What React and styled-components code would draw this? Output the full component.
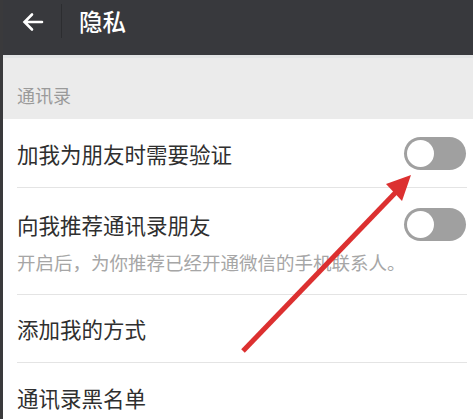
import React from 'react';
import styled, { createGlobalStyle } from 'styled-components';

const GlobalStyles = createGlobalStyle`
  body {
    margin: 0;
    font-family: 'Noto Sans CJK SC', 'Noto Sans', sans-serif;
    background: #fff;
    overflow: hidden;
  }
`;

const Page = styled.div`
  position: relative;
  width: 473px;
  height: 419px;
  overflow: hidden;
  background: #fff;
  border-left: 3px solid #3a3a3c;
  box-sizing: border-box;
`;

const Header = styled.div`
  display: flex;
  align-items: center;
  height: 55px;
  background: #38393d;
  border-bottom: 3px solid #e2e4e5;
`;

const BackButton = styled.div`
  width: 58px;
  display: flex;
  justify-content: center;
  align-items: center;
  padding-left: 2px;
  box-sizing: border-box;
`;

const Divider = styled.div`
  width: 1px;
  height: 34px;
  background: #2c2d30;
  margin-top: -14px;
`;

const Title = styled.div`
  color: #fff;
  font-size: 23.5px;
  font-weight: 500;
  margin-left: 17px;
  margin-top: -14px;
`;

const SectionHead = styled.div`
  background: #ebebeb;
  color: #9a9a9a;
  font-size: 18px;
  height: 61px;
  box-sizing: border-box;
  padding: 24px 0 0 14px;
`;

const Row = styled.div`
  margin-left: 14px;
  margin-right: 6px;
  border-bottom: ${p => (p.$last ? 'none' : '1px solid #e4e4e4')};
  height: ${p => p.$h}px;
  box-sizing: border-box;
  display: flex;
  flex-direction: column;
  justify-content: center;
`;

const Line = styled.div`
  display: flex;
  align-items: center;
  justify-content: space-between;
`;

const Label = styled.div`
  font-size: 21.5px;
  color: #2f2f2f;
`;

const Hint = styled.div`
  font-size: 18.5px;
  color: #a6a6a6;
  margin-top: 8px;
  white-space: nowrap;
`;

const Toggle = styled.div`
  width: 62px;
  height: 33px;
  border-radius: 17px;
  background: #a0a0a0;
  position: relative;
  margin-right: 1px;
  &::after {
    content: '';
    position: absolute;
    left: 3px;
    top: 3px;
    width: 27px;
    height: 27px;
    border-radius: 50%;
    background: #fff;
  }
`;

const Overlay = styled.svg`
  position: absolute;
  left: -3px;
  top: 0;
  pointer-events: none;
`;

export default function App() {
  return (
    <Page>
      <GlobalStyles />
      <Header>
        <BackButton>
          <svg width="24" height="24" viewBox="0 0 24 24" style={{ marginTop: -12 }}>
            <path d="M21 12H4M11 4.5L3.5 12l7.5 7.5" fill="none" stroke="#fff" strokeWidth="2.6" strokeLinecap="round" />
          </svg>
        </BackButton>
        <Divider />
        <Title>隐私</Title>
      </Header>
      <SectionHead>通讯录</SectionHead>
      <Row $h={69}>
        <Line>
          <Label>加我为朋友时需要验证</Label>
          <Toggle />
        </Line>
      </Row>
      <Row $h={107}>
        <Line>
          <Label>向我推荐通讯录朋友</Label>
          <Toggle />
        </Line>
        <Hint>开启后，为你推荐已经开通微信的手机联系人。</Hint>
      </Row>
      <Row $h={68}>
        <Label>添加我的方式</Label>
      </Row>
      <Row $h={68} $last>
        <Label>通讯录黑名单</Label>
      </Row>
      <Overlay width="473" height="419">
        <line x1="243" y1="351" x2="397" y2="191" stroke="#dc3030" strokeWidth="5" />
        <polygon points="411,175 386,184 402,201" fill="#dc3030" />
      </Overlay>
    </Page>
  );
}
